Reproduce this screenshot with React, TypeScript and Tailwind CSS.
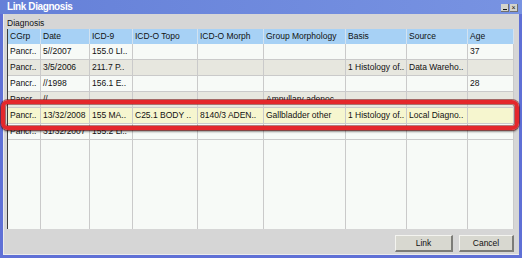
// App.tsx
const headers = ['CGrp', 'Date', 'ICD-9', 'ICD-O Topo', 'ICD-O Morph', 'Group Morphology', 'Basis', 'Source', 'Age'];

const rows: { cells: string[]; bg: string }[] = [
  { cells: ['Pancr..', '5//2007', '155.0 LI..', '', '', '', '', '', '37'], bg: 'bg-[#f7faf7]' },
  { cells: ['Pancr..', '3/5/2006', '211.7 P..', '', '', '', '1 Histology of..', 'Data Wareho..', ''], bg: 'bg-[#e7e7df]' },
  { cells: ['Pancr..', '//1998', '156.1 E..', '', '', '', '', '', '28'], bg: 'bg-[#f7faf7]' },
  { cells: ['Pancr..', '//', '', '', '', 'Ampullary adenoc..', '', '', ''], bg: 'bg-[#e7e7df]' },
  {
    cells: ['Pancr..', '13/32/2008', '155 MA..', 'C25.1 BODY ..', '8140/3 ADEN..', 'Gallbladder other', '1 Histology of..', 'Local Diagno..', ''],
    bg: 'bg-[#f6f6cf]',
  },
  { cells: ['Pancr..', '31/32/2007', '155.2 Li..', '', '', '', '', '', ''], bg: 'bg-[#f7faf7]' },
];

const grid = 'grid grid-cols-[33px_49px_43px_65px_66px_82px_61px_61px_46px]';

function Button({ label, w }: { label: string; w: string }) {
  return (
    <div
      className={`${w} h-[17px] flex items-center justify-center bg-[#d8d8d0] border-t border-l border-t-[#f4f4f0] border-l-[#f4f4f0] border-b-2 border-r-2 border-b-[#7c7c78] border-r-[#7c7c78] text-[8.5px] text-[#111]`}
    >
      {label}
    </div>
  );
}

export default function App() {
  return (
    <div className="relative w-[522px] h-[258px] flex flex-col bg-[#5f70d6] px-[3px] pb-[3px] font-['Liberation_Sans',Arial,sans-serif] overflow-hidden">
      {/* title bar */}
      <div className="-mx-[3px] h-[14px] flex items-center justify-between pl-[7px] pr-[4px] bg-gradient-to-r from-[#6580d8] to-[#7893e2]">
        <span className="text-white font-bold text-[10px] tracking-[-0.4px] leading-none">Link Diagnosis</span>
        <div className="flex gap-[1px] mt-[2px]">
          <div className="w-[8px] h-[8px] bg-[#d4d4cc] border-r border-b border-[#707070] flex items-end justify-center">
            <div className="w-[4px] h-[1px] bg-[#111] mb-[1px]" />
          </div>
          <div className="w-[8px] h-[8px] bg-[#d4d4cc] border-r border-b border-[#707070] flex items-center justify-center text-[7px] leading-none text-[#111]">
            ×
          </div>
        </div>
      </div>

      {/* body */}
      <div className="flex-1 flex flex-col bg-[#d6d6d6] border-l border-b border-[#ececec]">
        <div className="h-[15px] pt-[4px] pl-[3px] text-[8.5px] leading-[10px] text-[#111]">Diagnosis</div>

        <div className="ml-[3px] mr-[5px] h-[200px] flex flex-col border-l border-[#3c3c3c] bg-[#f7faf7] overflow-hidden text-[8.5px] text-[#111]">
          <div className={`${grid} h-[15px] bg-[#a7d1f5]`}>
            {headers.map((h) => (
              <div key={h} className="pl-[2px] leading-[15px] border-r border-[#d2e2f0] whitespace-nowrap overflow-hidden">
                {h}
              </div>
            ))}
          </div>
          {rows.map((r, i) => (
            <div key={i} className={`${grid} h-[16px] ${r.bg}`}>
              {r.cells.map((c, j) => (
                <div key={j} className="pl-[2px] leading-[15px] border-r border-b border-[#cacaca] whitespace-nowrap overflow-hidden">
                  {c}
                </div>
              ))}
            </div>
          ))}
          <div className={`${grid} flex-1`}>
            {headers.map((h) => (
              <div key={h} className="border-r border-[#cacaca]" />
            ))}
          </div>
        </div>

        <div className="flex-1 flex justify-end items-start pt-[6px] pr-[5px] gap-[6px]">
          <Button label="Link" w="w-[58px]" />
          <Button label="Cancel" w="w-[55px]" />
        </div>
      </div>

      {/* red callout ring */}
      <div className="absolute left-[1px] top-[100px] w-[518px] h-[30px] rounded-[7px] border-[4px] border-[#e4272b] shadow-[0_0_0_1px_rgba(110,0,0,0.55),inset_0_0_0_1px_rgba(110,0,0,0.5),0_2px_2px_rgba(0,0,0,0.4)]" />
    </div>
  );
}
